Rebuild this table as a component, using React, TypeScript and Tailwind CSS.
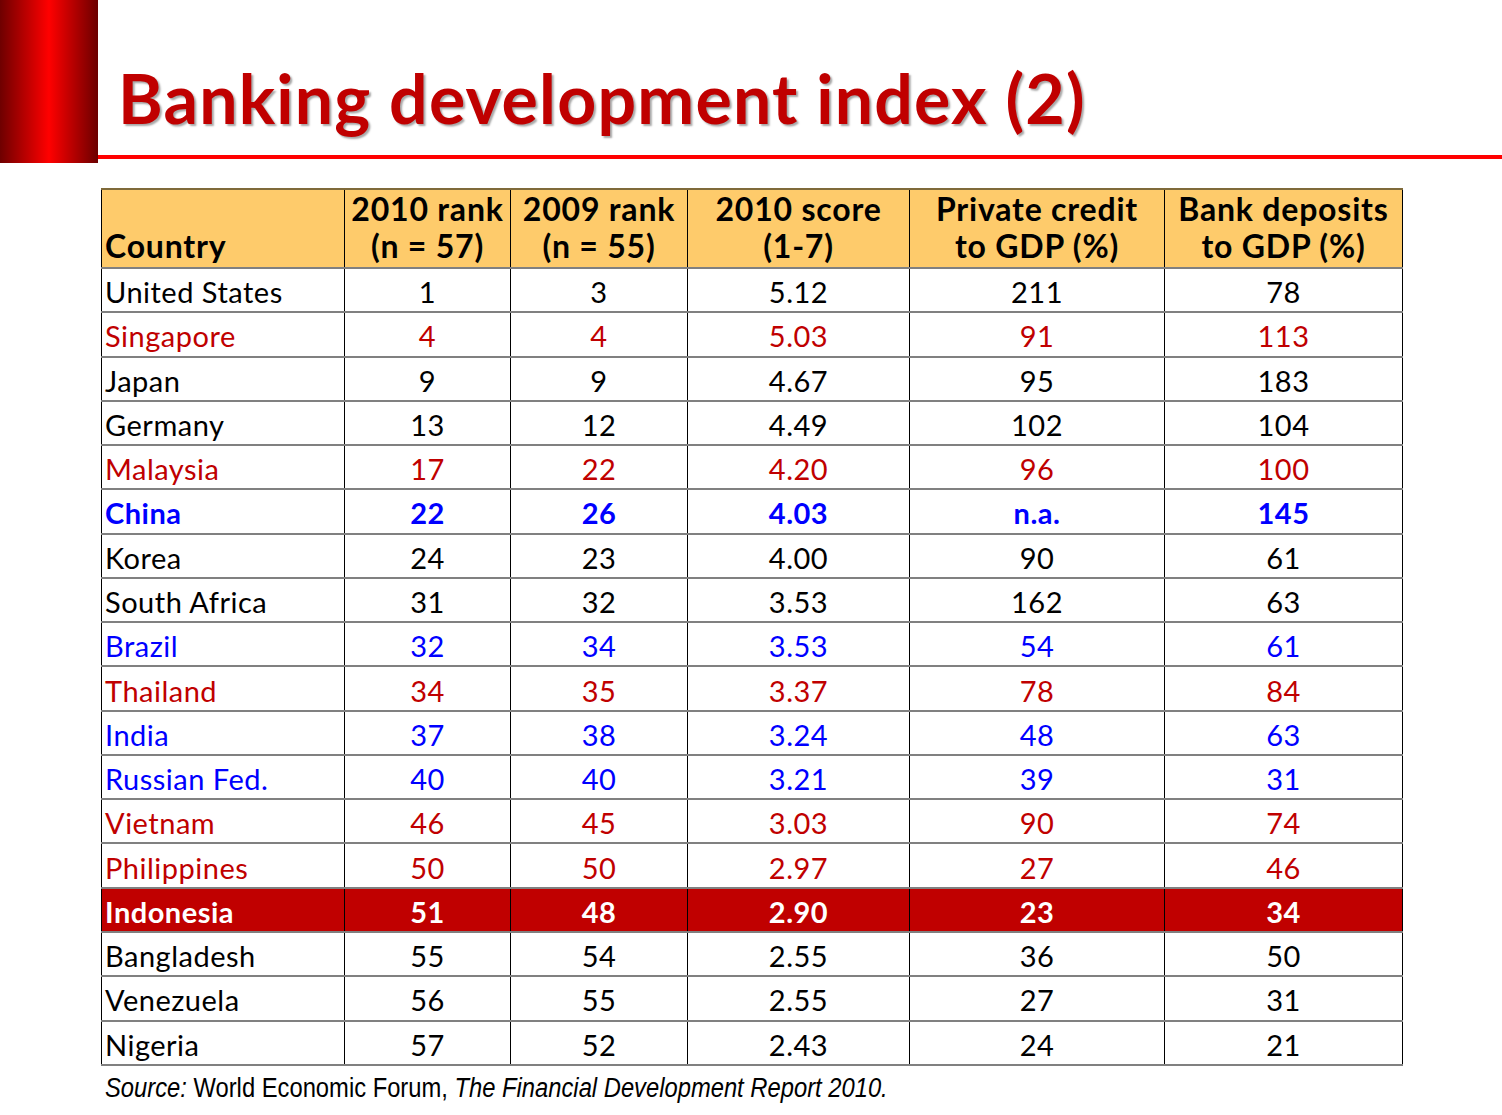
import React from "react";

type Row = {
  country: string;
  r10: string;
  r09: string;
  score: string;
  credit: string;
  deposits: string;
  tone: "black" | "red" | "blue" | "blueBold" | "highlight";
};

const rows: Row[] = [
  { country: "United States", r10: "1", r09: "3", score: "5.12", credit: "211", deposits: "78", tone: "black" },
  { country: "Singapore", r10: "4", r09: "4", score: "5.03", credit: "91", deposits: "113", tone: "red" },
  { country: "Japan", r10: "9", r09: "9", score: "4.67", credit: "95", deposits: "183", tone: "black" },
  { country: "Germany", r10: "13", r09: "12", score: "4.49", credit: "102", deposits: "104", tone: "black" },
  { country: "Malaysia", r10: "17", r09: "22", score: "4.20", credit: "96", deposits: "100", tone: "red" },
  { country: "China", r10: "22", r09: "26", score: "4.03", credit: "n.a.", deposits: "145", tone: "blueBold" },
  { country: "Korea", r10: "24", r09: "23", score: "4.00", credit: "90", deposits: "61", tone: "black" },
  { country: "South Africa", r10: "31", r09: "32", score: "3.53", credit: "162", deposits: "63", tone: "black" },
  { country: "Brazil", r10: "32", r09: "34", score: "3.53", credit: "54", deposits: "61", tone: "blue" },
  { country: "Thailand", r10: "34", r09: "35", score: "3.37", credit: "78", deposits: "84", tone: "red" },
  { country: "India", r10: "37", r09: "38", score: "3.24", credit: "48", deposits: "63", tone: "blue" },
  { country: "Russian Fed.", r10: "40", r09: "40", score: "3.21", credit: "39", deposits: "31", tone: "blue" },
  { country: "Vietnam", r10: "46", r09: "45", score: "3.03", credit: "90", deposits: "74", tone: "red" },
  { country: "Philippines", r10: "50", r09: "50", score: "2.97", credit: "27", deposits: "46", tone: "red" },
  { country: "Indonesia", r10: "51", r09: "48", score: "2.90", credit: "23", deposits: "34", tone: "highlight" },
  { country: "Bangladesh", r10: "55", r09: "54", score: "2.55", credit: "36", deposits: "50", tone: "black" },
  { country: "Venezuela", r10: "56", r09: "55", score: "2.55", credit: "27", deposits: "31", tone: "black" },
  { country: "Nigeria", r10: "57", r09: "52", score: "2.43", credit: "24", deposits: "21", tone: "black" },
];

const toneClass: Record<Row["tone"], string> = {
  black: "text-black",
  red: "text-[#c00000]",
  blue: "text-[#0000ff]",
  blueBold: "text-[#0000ff] font-bold",
  highlight: "bg-[#c00000] text-white font-bold",
};

const cell = "border-x border-black border-b-2 border-b-[#808080] p-0";
const head = `${cell} border-t-2 border-t-[#7f6a3a] align-bottom pb-[3px]`;

export default function App() {
  return (
    <div className="w-[1502px] h-[1115px] bg-white overflow-hidden font-['Lato',sans-serif] text-black">
      {/* Header band */}
      <div className="flex h-[163px]">
        <div className="w-[98px] h-[163px] shrink-0 bg-[linear-gradient(to_right,#6e0000_0%,#ff0000_50%,#6b0000_100%)]" />
        <div className="flex-1 flex flex-col">
          <div className="h-[155px] flex items-end pl-[20px] pb-[23px]">
            <h1 className="text-[#c00000] font-bold text-[68px] leading-none tracking-[1.2px] [text-shadow:2px_2px_2px_rgba(0,0,0,0.35)]">
              Banking development index (2)
            </h1>
          </div>
          <div className="h-[4px] bg-[#ff0000]" />
        </div>
      </div>

      {/* Table */}
      <div className="pl-[101px] pt-[25px]">
        <table className="border-collapse table-fixed w-[1301px] text-[29px] leading-none tracking-[0.5px]">
          <colgroup>
            <col className="w-[243px]" />
            <col className="w-[166px]" />
            <col className="w-[177px]" />
            <col className="w-[222px]" />
            <col className="w-[255px]" />
            <col className="w-[238px]" />
          </colgroup>
          <thead>
            <tr className="h-[79px] bg-[#fecb6b] font-bold text-[32px] leading-[37px] tracking-[0.8px]">
              <th className={`${head} text-left pl-[3px]`}>Country</th>
              <th className={`${head} text-center`}>2010 rank<br />(n = 57)</th>
              <th className={`${head} text-center`}>2009 rank<br />(n = 55)</th>
              <th className={`${head} text-center`}>2010 score<br />(1-7)</th>
              <th className={`${head} text-center`}>Private credit<br />to GDP (%)</th>
              <th className={`${head} text-center`}>Bank deposits<br />to GDP (%)</th>
            </tr>
          </thead>
          <tbody>
            {rows.map((r) => (
              <tr
                key={r.country}
                className={`h-[44.28px] ${toneClass[r.tone]} ${r.tone === "highlight" ? "[&>td]:border-t-2 [&>td]:border-t-[#7a0000]" : ""}`}
              >
                <td className={`${cell} align-middle text-left pl-[3px] pt-[3px]`}>{r.country}</td>
                <td className={`${cell} align-middle text-center pt-[3px]`}>{r.r10}</td>
                <td className={`${cell} align-middle text-center pt-[3px]`}>{r.r09}</td>
                <td className={`${cell} align-middle text-center pt-[3px]`}>{r.score}</td>
                <td className={`${cell} align-middle text-center pt-[3px]`}>{r.credit}</td>
                <td className={`${cell} align-middle text-center pt-[3px]`}>{r.deposits}</td>
              </tr>
            ))}
          </tbody>
        </table>
        <p className="mt-[9px] pl-[4px] font-['Liberation_Sans',sans-serif] text-[27px] leading-none">
          <span className="inline-block origin-left scale-x-[0.88] whitespace-nowrap">
            <span className="italic">Source:</span> World Economic Forum,{" "}
            <span className="italic">The Financial Development Report 2010.</span>
          </span>
        </p>
      </div>
    </div>
  );
}
